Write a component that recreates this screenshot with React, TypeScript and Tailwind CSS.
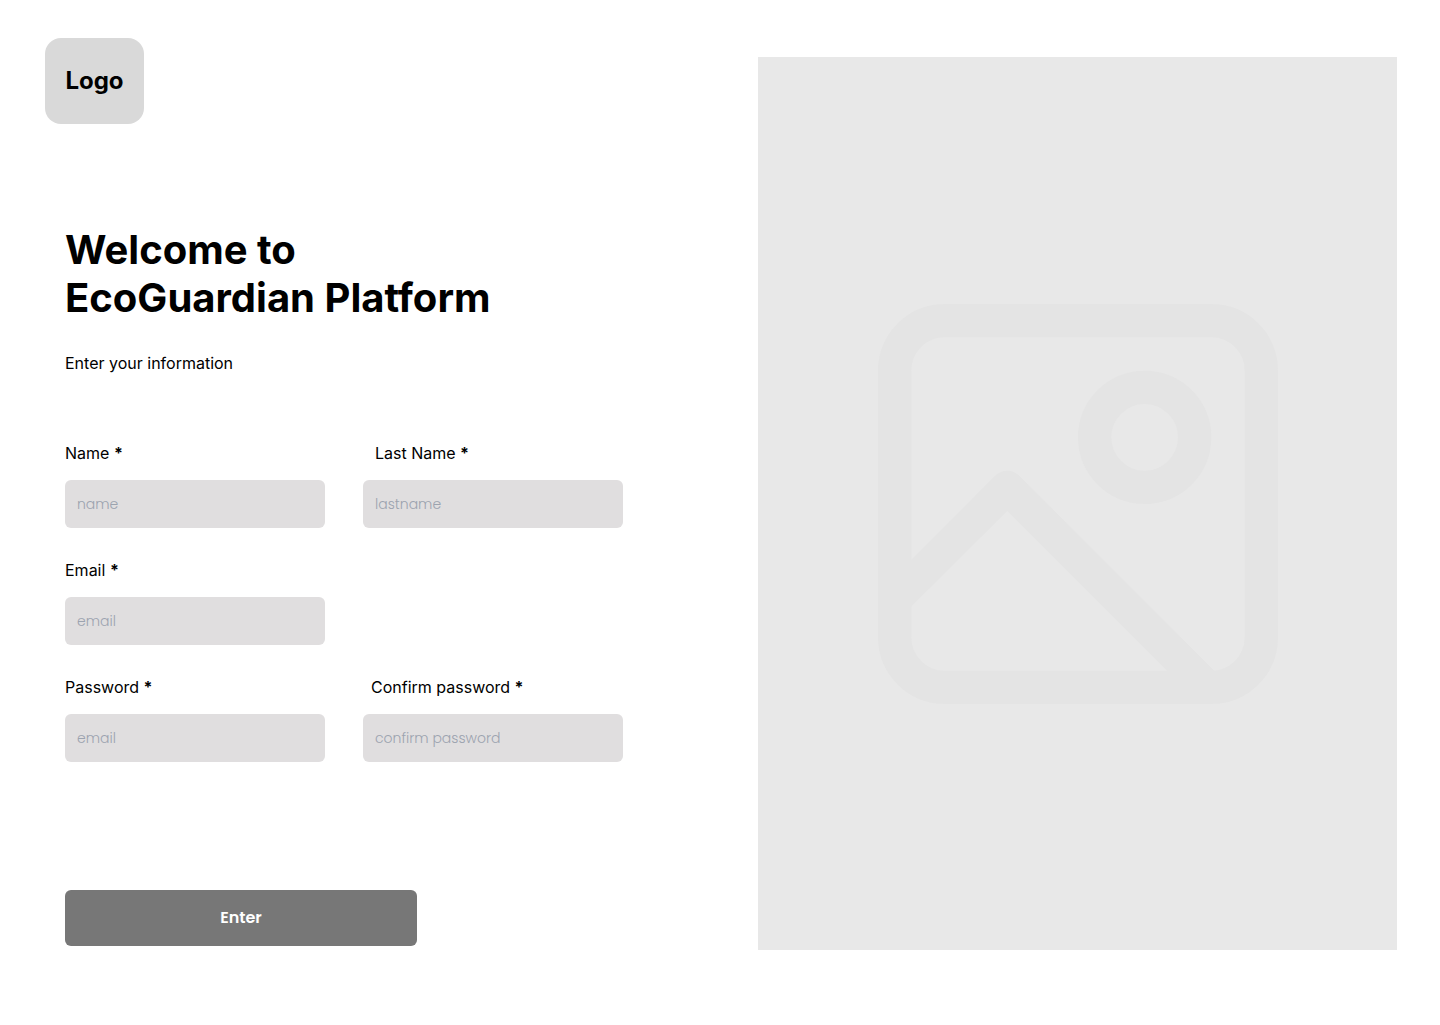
type FieldProps = {
  id: string;
  label: string;
  placeholder: string;
  type?: string;
  labelClass?: string;
};

function Field({ id, label, placeholder, type = "text", labelClass = "" }: FieldProps) {
  return (
    <div className="flex w-[260px] flex-col gap-[15px]">
      <label htmlFor={id} className={`text-base ${labelClass}`}>
        {label} <span className="font-bold">*</span>
      </label>
      <input
        id={id}
        type={type}
        placeholder={placeholder}
        className="h-12 w-full rounded-md bg-[#e0dedf] px-3 font-['Poppins','Inter',sans-serif] text-sm font-light text-gray-700 outline-none placeholder:text-[#9ca3af] focus:ring-2 focus:ring-gray-400"
      />
    </div>
  );
}

function ImagePlaceholder() {
  return (
    <svg
      viewBox="0 0 24 24"
      className="w-[400px] max-w-3/4"
      fill="none"
      stroke="#e4e4e4"
      strokeWidth="2"
      strokeLinejoin="round"
      aria-hidden="true"
    >
      <rect x="1" y="1" width="22" height="22" rx="3" />
      <circle cx="16" cy="8" r="3" />
      <path d="M1 17.75 7.75 11l12 12" />
    </svg>
  );
}

export default function App() {
  return (
    <main className="grid min-h-screen grid-cols-[758fr_639fr] bg-white pr-[43px] font-['Inter',sans-serif] text-black">
      <section className="flex flex-col items-start pt-[38px] pl-[45px]">
        <div className="flex h-[86px] w-[99px] items-center justify-center rounded-2xl bg-[#d9d9d9] text-2xl font-bold">
          Logo
        </div>
        <div className="mt-[102px] pl-5">
          <h1 className="text-[40px] leading-12 font-bold">
            Welcome to
            <br />
            EcoGuardian Platform
          </h1>
          <p className="mt-[29px] text-base">Enter your information</p>
          <form className="mt-[66px]" onSubmit={(e) => e.preventDefault()}>
            <div className="flex flex-col gap-[30px]">
              <div className="flex gap-[38px]">
                <Field id="name" label="Name" placeholder="name" />
                <Field id="lastname" label="Last Name" placeholder="lastname" labelClass="pl-3" />
              </div>
              <Field id="email" label="Email" placeholder="email" type="email" />
              <div className="flex gap-[38px]">
                <Field id="password" label="Password" placeholder="email" type="password" />
                <Field
                  id="confirm"
                  label="Confirm password"
                  placeholder="confirm password"
                  type="password"
                  labelClass="pl-2"
                />
              </div>
            </div>
            <button
              type="submit"
              className="mt-32 h-14 w-[352px] rounded-md bg-[#777777] font-['Poppins','Inter',sans-serif] text-base font-semibold text-white"
            >
              Enter
            </button>
          </form>
        </div>
      </section>
      <aside className="mt-[57px] mb-[75px] flex items-center justify-center bg-[#e8e8e8]">
        <ImagePlaceholder />
      </aside>
    </main>
  );
}
